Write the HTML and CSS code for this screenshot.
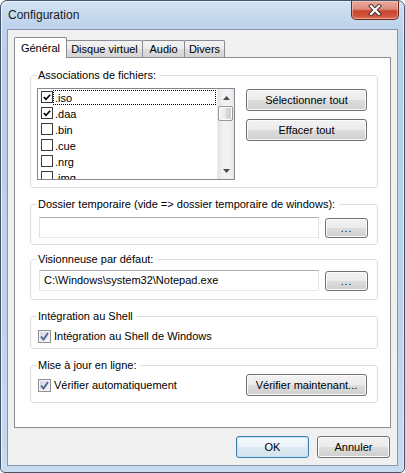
FILE: index.html
```html
<!DOCTYPE html>
<html lang="fr">
<head>
<meta charset="utf-8">
<title>Configuration</title>
<link rel="stylesheet" href="styles.css">
</head>
<body>
<div class="window">
  <div class="titlebar">
    <span class="title">Configuration</span>
    <div class="close">
      <svg width="14" height="12" viewBox="0 0 14 12">
        <path d="M3 2 L11 10 M11 2 L3 10" stroke="#3b2f2f" stroke-width="4" stroke-linecap="square"/>
        <path d="M3 2 L11 10 M11 2 L3 10" stroke="#ffffff" stroke-width="2.2" stroke-linecap="square"/>
      </svg>
    </div>
  </div>
  <div class="client">
    <div class="tabs">
      <div class="tab active t1">Général</div>
      <div class="tab t2">Disque virtuel</div>
      <div class="tab t3">Audio</div>
      <div class="tab t4">Divers</div>
    </div>
    <div class="panel">
      <fieldset class="group g1">
        <legend>Associations de fichiers:</legend>
        <div class="assoc">
          <div class="listbox">
            <div class="items">
              <div class="item"><span class="lcb"><svg width="11" height="11" viewBox="0 0 11 11"><path d="M2 5 L4.3 7.5 L9 2.5" stroke="#000" stroke-width="1.8" fill="none"/></svg></span><span class="ltext focus">.iso</span></div>
              <div class="item"><span class="lcb"><svg width="11" height="11" viewBox="0 0 11 11"><path d="M2 5 L4.3 7.5 L9 2.5" stroke="#000" stroke-width="1.8" fill="none"/></svg></span><span class="ltext">.daa</span></div>
              <div class="item"><span class="lcb"></span><span class="ltext">.bin</span></div>
              <div class="item"><span class="lcb"></span><span class="ltext">.cue</span></div>
              <div class="item"><span class="lcb"></span><span class="ltext">.nrg</span></div>
              <div class="item"><span class="lcb"></span><span class="ltext">.img</span></div>
            </div>
            <div class="scrollbar">
              <div class="sb-btn"><svg width="7" height="4" viewBox="0 0 7 4"><path d="M0 4 L3.5 0 L7 4 Z" fill="#4a4a4a"/></svg></div>
              <div class="sb-thumb"></div>
              <div class="sb-track"></div>
              <div class="sb-btn"><svg width="7" height="4" viewBox="0 0 7 4"><path d="M0 0 L3.5 4 L7 0 Z" fill="#4a4a4a"/></svg></div>
            </div>
          </div>
          <div class="btncol">
            <button class="btn wide">Sélectionner tout</button>
            <button class="btn wide">Effacer tout</button>
          </div>
        </div>
      </fieldset>

      <fieldset class="group g2">
        <legend>Dossier temporaire (vide =&gt; dossier temporaire de windows):</legend>
        <div class="pathrow">
          <div class="field"></div>
          <button class="btn dots">...</button>
        </div>
      </fieldset>

      <fieldset class="group g3">
        <legend>Visionneuse par défaut:</legend>
        <div class="pathrow">
          <div class="field">C:\Windows\system32\Notepad.exe</div>
          <button class="btn dots">...</button>
        </div>
      </fieldset>

      <fieldset class="group g4">
        <legend>Intégration au Shell</legend>
        <div class="checkrow">
          <span class="tcb"><svg width="9" height="9" viewBox="0 0 9 9"><path d="M1 4.5 L3.5 7.5 L8 1" stroke="#4b5f95" stroke-width="1.8" fill="none"/></svg></span>
          <span>Intégration au Shell de Windows</span>
        </div>
      </fieldset>

      <fieldset class="group g5">
        <legend>Mise à jour en ligne:</legend>
        <div class="updrow">
          <div class="checkrow">
            <span class="tcb"><svg width="9" height="9" viewBox="0 0 9 9"><path d="M1 4.5 L3.5 7.5 L8 1" stroke="#4b5f95" stroke-width="1.8" fill="none"/></svg></span>
            <span>Vérifier automatiquement</span>
          </div>
          <button class="btn wide">Vérifier maintenant...</button>
        </div>
      </fieldset>
    </div>
    <div class="footer">
      <button class="btn std default">OK</button>
      <button class="btn std">Annuler</button>
    </div>
  </div>
</div>
</body>
</html>
```
FILE: styles.css
```css
* { box-sizing: border-box; }
html, body { margin: 0; padding: 0; }
body {
  width: 405px;
  height: 473px;
  overflow: hidden;
  background: #ffffff;
  font-family: "Liberation Sans", Arial, sans-serif;
  font-size: 11px;
  color: #000;
}
.window {
  width: 405px;
  height: 473px;
  border: 1px solid #44566c;
  border-radius: 7px 7px 5px 5px;
  background: linear-gradient(180deg, #d3e2f3 0px, #c0d5ec 22px, #b9cfe8 60px, #bdd2ea 300px, #c8dbef 473px);
  display: flex;
  flex-direction: column;
  padding: 0 6px 6px 6px;
  box-shadow: inset 1px 1px 0 #e9f1fa, inset -1px 0 0 #dfe9f5;
}
.titlebar {
  height: 28px;
  display: flex;
  align-items: flex-start;
  flex: none;
}
.title {
  margin-left: 1px;
  padding-top: 7px;
  font-size: 12px;
  line-height: 14px;
  color: #1a1a1a;
}
.close {
  margin-left: auto;
  margin-right: -1px;
  width: 48px;
  height: 19px;
  border: 1px solid #6b2a22;
  border-top: none;
  border-radius: 0 0 5px 5px;
  background: linear-gradient(180deg, #e9a99a 0%, #de8d7b 45%, #c9452f 55%, #d2563d 85%, #e07a5c 100%);
  box-shadow: inset 0 0 0 1px rgba(255, 220, 210, 0.45);
  display: flex;
  align-items: center;
  justify-content: center;
}
.close svg { display: block; }
.client {
  flex: 1;
  border: 1px solid #8597ad;
  background: #f0f0f0;
  padding: 7px 6px 0 6px;
  display: flex;
  flex-direction: column;
}
.tabs {
  height: 20px;
  display: flex;
  align-items: flex-end;
  flex: none;
}
.tab {
  height: 17px;
  border: 1px solid #898c95;
  border-bottom: none;
  margin-left: -1px;
  background: linear-gradient(180deg, #f3f3f3 0%, #ebebeb 50%, #dedede 51%, #d4d4d4 100%);
  display: flex;
  align-items: center;
  justify-content: center;
  color: #000;
  border-radius: 2px 2px 0 0;
}
.tab.active {
  height: 21px;
  align-self: flex-start;
  background: #ffffff;
  position: relative;
  z-index: 1;
  margin-left: 0;
  margin-right: 0;
}
.t1 { width: 53px; }
.t2 { width: 77px; }
.t3 { width: 43px; }
.t4 { width: 41px; }
.panel {
  width: 377px;
  height: 371px;
  flex: none;
  border: 1px solid #898c95;
  background: #ffffff;
  padding: 0 0 0 15px;
  display: flex;
  flex-direction: column;
  align-items: flex-start;
}
.group {
  margin: 0;
  width: 348px;
  min-width: 0;
  border: 1px solid #d5dfe5;
  border-radius: 3px;
  padding: 0 10px 6px 6px;
}
.group legend {
  padding: 0 4px 0 1px;
  margin: 0;
  line-height: 13px;
  height: 13px;
}
.g1 { margin-top: 11px; padding-top: 6px; padding-bottom: 7px; }
.g2 { margin-top: 10px; padding-top: 6px; padding-bottom: 6px; padding-right: 9px; }
.g3 { margin-top: 8px; padding-top: 4px; padding-bottom: 8px; padding-right: 9px; }
.g4 { margin-top: 10px; padding-top: 5px; padding-bottom: 4px; }
.g5 { margin-top: 10px; padding-top: 2px; padding-bottom: 6px; }

.assoc { display: flex; align-items: flex-start; }
.listbox {
  width: 198px;
  height: 92px;
  border: 1px solid #828790;
  background: #fff;
  display: flex;
  overflow: hidden;
}
.items {
  flex: 1;
  padding: 0 0 0 3px;
  overflow: hidden;
}
.item {
  height: 16px;
  display: flex;
  align-items: center;
}
.lcb {
  width: 12px;
  height: 12px;
  flex: none;
  border: 1px solid #3c3c3c;
  background: #fff;
  display: flex;
  align-items: center;
  justify-content: center;
}
.lcb svg { display: block; }
.ltext {
  flex: 1;
  height: 15px;
  line-height: 13px;
  padding: 1px 0 0 1px;
  border: 1px solid transparent;
  margin-right: 1px;
}
.ltext.focus { border: 1px dotted #000; }
.scrollbar {
  width: 17px;
  flex: none;
  display: flex;
  flex-direction: column;
  background: linear-gradient(90deg, #e3e3e3 0%, #f1f1f1 30%, #f1f1f1 70%, #e6e6e6 100%);
  border-left: 1px solid #ececec;
}
.sb-btn {
  height: 17px;
  display: flex;
  align-items: center;
  justify-content: center;
  flex: none;
}
.sb-btn svg { display: block; }
.sb-thumb {
  height: 15px;
  margin: 0 1px 0 0;
  border: 1px solid #979797;
  border-radius: 2px;
  background: linear-gradient(90deg, #f4f4f4 0%, #e9e9e9 50%, #d9d9d9 51%, #cfcfcf 100%);
  box-shadow: inset 0 0 0 1px #fdfdfd;
  flex: none;
}
.sb-track { flex: 1; }

.btn {
  font-family: "Liberation Sans", Arial, sans-serif;
  font-size: 11px;
  color: #000;
  height: 22px;
  padding: 0;
  border: 1px solid #707070;
  border-radius: 3px;
  background: linear-gradient(180deg, #f2f2f2 0%, #ebebeb 48%, #dddddd 52%, #cfcfcf 100%);
  box-shadow: inset 0 0 0 1px #fbfbfb;
  display: flex;
  align-items: center;
  justify-content: center;
}
.btncol {
  margin-left: 11px;
  padding-top: 1px;
  display: flex;
  flex-direction: column;
  gap: 8px;
}
.wide { width: 121px; }
.std { width: 73px; }
.dots { width: 43px; height: 20px; align-items: flex-end; padding-bottom: 3px; letter-spacing: 1px; font-size: 10px; line-height: 10px; }
.default {
  border-color: #3c7fb1;
  background: linear-gradient(180deg, #f5fafd 0%, #eaf3f9 48%, #dde9f2 52%, #d3e3ee 100%);
  box-shadow: inset 0 0 0 1px #c4e5f6;
}
.pathrow {
  display: flex;
  align-items: center;
  justify-content: space-between;
}
.field {
  width: 280px;
  height: 21px;
  margin-left: 2px;
  border: 1px solid;
  border-color: #abadb3 #e2e3ea #e3e9ef #e2e3ea;
  background: #fff;
  padding: 0 4px;
  line-height: 19px;
  white-space: nowrap;
}
.checkrow {
  display: flex;
  align-items: center;
  height: 16px;
  gap: 3px;
  margin-left: 1px;
}
.tcb {
  width: 13px;
  height: 13px;
  flex: none;
  border: 1px solid #8f8f8f;
  background: linear-gradient(135deg, #cfd3d9 0%, #e7e9ec 60%, #f7f7f7 100%);
  box-shadow: inset 0 0 0 1px #f4f4f4;
  display: flex;
  align-items: center;
  justify-content: center;
}
.tcb svg { display: block; }
.updrow {
  display: flex;
  align-items: center;
  justify-content: space-between;
}
.footer {
  display: flex;
  justify-content: flex-end;
  gap: 8px;
  padding-top: 8px;
  padding-right: 1px;
  width: 377px;
}
```
